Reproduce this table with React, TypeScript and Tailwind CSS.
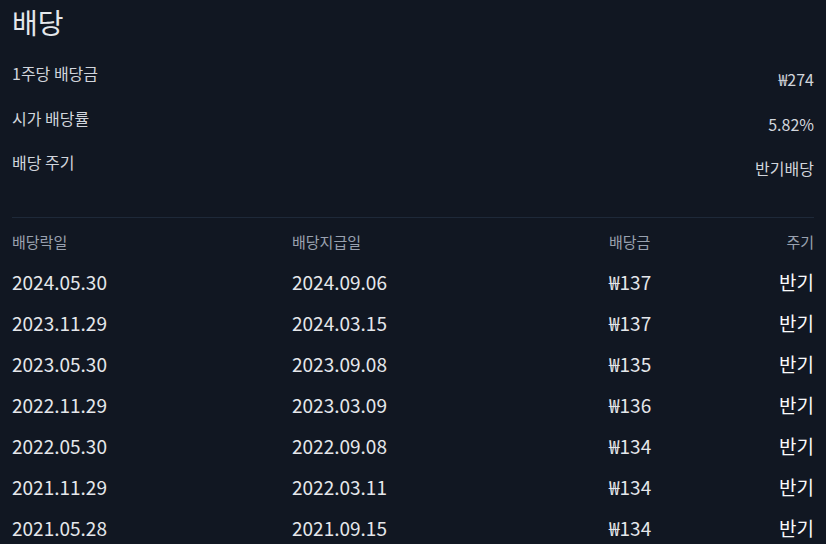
import React from 'react'

const SUMMARY = [
  { label: '1주당 배당금', value: '₩274' },
  { label: '시가 배당률', value: '5.82%' },
  { label: '배당 주기', value: '반기배당' },
]

const HISTORY = [
  ['2024.05.30', '2024.09.06', '₩137'],
  ['2023.11.29', '2024.03.15', '₩137'],
  ['2023.05.30', '2023.09.08', '₩135'],
  ['2022.11.29', '2023.03.09', '₩136'],
  ['2022.05.30', '2022.09.08', '₩134'],
  ['2021.11.29', '2022.03.11', '₩134'],
  ['2021.05.28', '2021.09.15', '₩134'],
]

export default function App() {
  return (
    <div
      className="w-[826px] h-[544px] overflow-hidden bg-[#111722] px-[12px] text-gray-300"
      style={{ fontFamily: '"Noto Sans CJK KR", "Noto Sans", sans-serif' }}
    >
      {/* 제목 */}
      <h1 className="text-[28px] leading-[40px] text-gray-200 pt-[2px]">배당</h1>

      {/* 요약 */}
      <div className="mt-[19px]">
        {SUMMARY.map((s) => (
          <div key={s.label} className="flex justify-between h-[44.5px] text-[16px]">
            <span>{s.label}</span>
            <span className="pt-[6px]">{s.value}</span>
          </div>
        ))}
      </div>

      <div className="mt-[22px] border-t border-gray-800" />

      {/* 배당 내역 */}
      <div className="grid grid-cols-[280px_317px_1fr_auto] mt-[13px]">
        <div className="text-[15px] text-gray-400 h-[30px]">배당락일</div>
        <div className="text-[15px] text-gray-400">배당지급일</div>
        <div className="text-[15px] text-gray-400">배당금</div>
        <div className="text-[15px] text-gray-400 text-right">주기</div>
        {HISTORY.map(([ex, pay, amt]) => (
          <React.Fragment key={ex}>
            <div className="text-[19px] h-[40.5px] leading-[41px] text-gray-200">{ex}</div>
            <div className="text-[19px] leading-[41px] text-gray-200">{pay}</div>
            <div className="text-[19px] leading-[41px] text-gray-200">{amt}</div>
            <div className="text-[19px] leading-[41px] text-right text-gray-50">반기</div>
          </React.Fragment>
        ))}
      </div>
    </div>
  )
}
